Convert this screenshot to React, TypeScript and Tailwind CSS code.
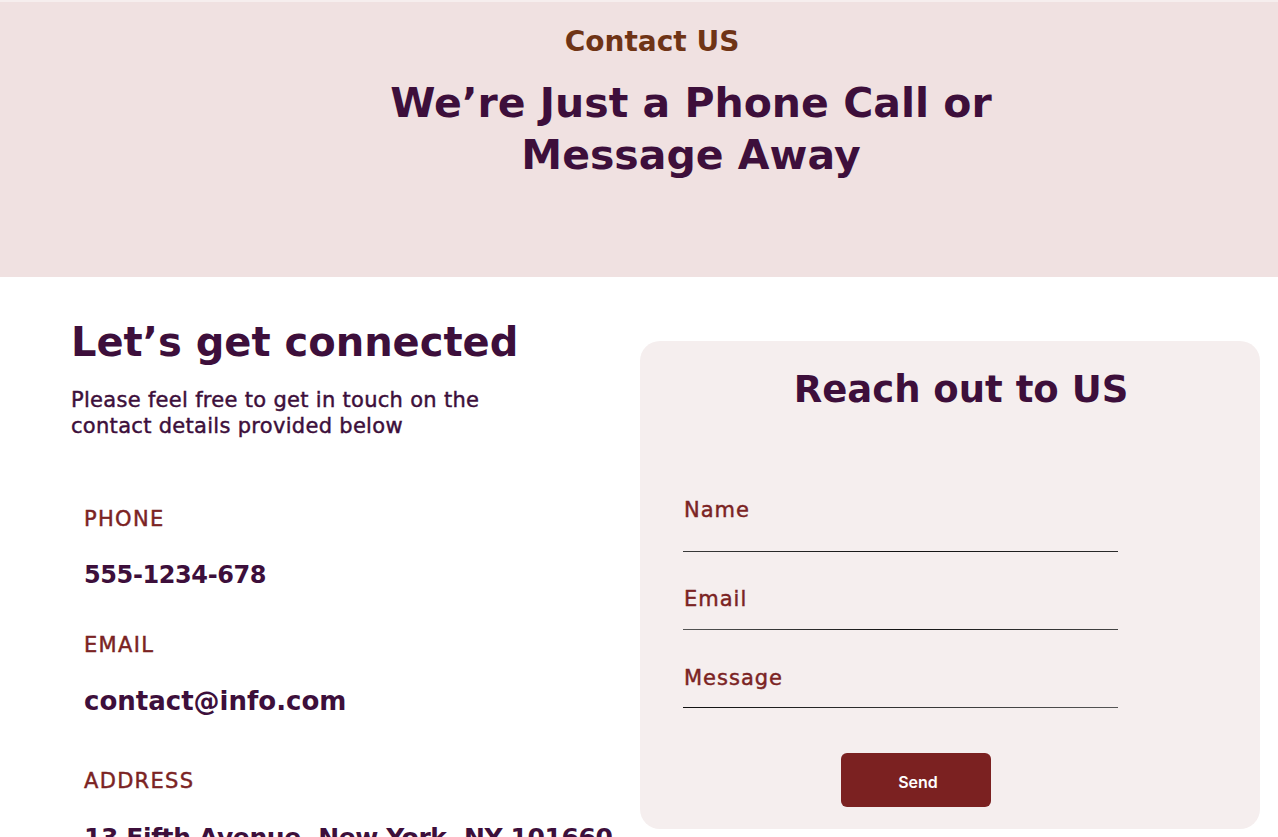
export default function App() {
  const head = "font-['DejaVu_Sans',sans-serif]"
  const medium = "[-webkit-text-stroke:0.45px_currentColor]"

  return (
    <div className={`w-[1278px] min-h-[837px] bg-white overflow-hidden ${head}`}>
      <div className="h-[2px] bg-[#f6eeee]" />

      {/* Banner */}
      <header className="h-[275px] bg-[#f0e1e1] pt-[23px] text-center">
        <p className="pl-[26px] text-[28px] leading-[34px] font-bold text-[#6f3416]">Contact US</p>
        <h1 className="mt-[18px] pl-[104px] text-[41px] leading-[52px] font-bold text-[#3d0f3b]">
          We’re Just a Phone Call or
          <br />
          Message Away
        </h1>
      </header>

      <main className="flex">
        {/* Left column */}
        <section className="w-[640px] shrink-0 pl-[71px] pt-[40px]">
          <h2 className="text-[40px] leading-[50px] font-bold text-[#3d0f3b]">Let’s get connected</h2>
          <p className={`mt-[20px] w-[460px] text-[21px] leading-[26px] tracking-[0.3px] text-[#3d0f3b] ${medium}`}>
            Please feel free to get in touch on the contact details provided below
          </p>

          <div className="pl-[13px]">
            <p className={`mt-[66px] text-[21px] leading-[28px] tracking-[1.3px] text-[#7b2323] ${medium}`}>PHONE</p>
            <p className="mt-[26px] text-[24px] leading-[32px] tracking-[-0.4px] font-bold text-[#3d0f3b]">555-1234-678</p>

            <p className={`mt-[40px] text-[21px] leading-[28px] tracking-[1.3px] text-[#7b2323] ${medium}`}>EMAIL</p>
            <p className="mt-[26px] text-[26px] leading-[32px] font-bold text-[#3d0f3b]">contact@info.com</p>

            <p className={`mt-[50px] text-[21px] leading-[28px] tracking-[1.3px] text-[#7b2323] ${medium}`}>ADDRESS</p>
            <p className="mt-[27px] whitespace-nowrap text-[25px] leading-[32px] tracking-[-0.4px] font-bold text-[#3d0f3b]">
              13 Fifth Avenue, New York, NY 101660
            </p>
          </div>
        </section>

        {/* Form card */}
        <section className="mt-[64px] w-[620px] h-[488px] shrink-0 rounded-[20px] bg-[#f5eeee] pt-[25px] pl-[44px]">
          <h2 className="pr-[22px] text-center text-[37px] leading-[48px] font-bold text-[#3d0f3b]">Reach out to US</h2>

          <form className="-ml-px w-[435px]" onSubmit={(e) => e.preventDefault()}>
            <label className="block mt-[83px] pl-px">
              <span className={`block text-[21px] leading-[26px] tracking-[1px] text-[#7b2323] ${medium}`}>Name</span>
            </label>
            <div className="h-[28px]" />
            <div className="h-px bg-gradient-to-r from-[#3a3a3a] via-[#111] to-[#2a2a2a]" />

            <label className="block mt-[34px] pl-px">
              <span className={`block text-[21px] leading-[26px] tracking-[1px] text-[#7b2323] ${medium}`}>Email</span>
            </label>
            <div className="h-[17px]" />
            <div className="h-px bg-gradient-to-r from-[#555] via-[#111] to-[#444]" />

            <label className="block mt-[35px] pl-px">
              <span className={`block text-[21px] leading-[26px] tracking-[1px] text-[#7b2323] ${medium}`}>Message</span>
            </label>
            <div className="h-[16px]" />
            <div className="h-px bg-gradient-to-r from-[#111] via-[#333] to-[#555]" />

            <button
              type="submit"
              className="mt-[45px] ml-[158px] w-[150px] h-[54px] rounded-[6px] bg-[#7b2121] pt-[3px] pl-[4px] text-white text-[16px] font-semibold font-['Inter',sans-serif]"
            >
              Send
            </button>
          </form>
        </section>
      </main>
    </div>
  )
}
